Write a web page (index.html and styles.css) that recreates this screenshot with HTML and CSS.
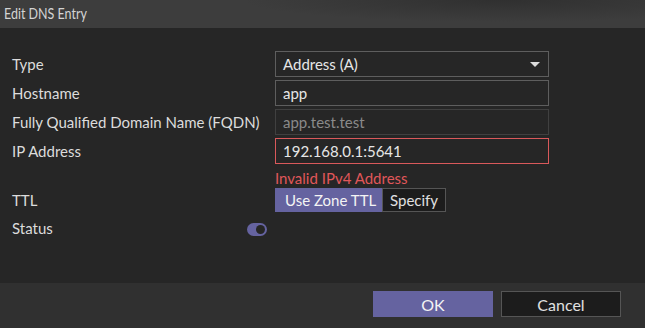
FILE: index.html
```html
<!DOCTYPE html>
<html lang="en">
<head>
    <meta charset="UTF-8">
    <title>Edit DNS Entry</title>
    <link rel="stylesheet" href="styles.css">
</head>
<body>
    <div class="dialog">
        <div class="title"><span class="title-text">Edit DNS Entry</span></div>
        <div class="form">
            <div class="label">Type</div>
            <div class="field select">Address (A)<span class="arrow"></span></div>

            <div class="label">Hostname</div>
            <div class="field">app</div>

            <div class="label">Fully Qualified Domain Name (FQDN)</div>
            <div class="field disabled">app.test.test</div>

            <div class="label">IP Address</div>
            <div class="field invalid">192.168.0.1:5641</div>

            <div></div>
            <div class="error">Invalid IPv4 Address</div>

            <div class="label">TTL</div>
            <div class="segmented">
                <span class="seg active">Use Zone TTL</span>
                <span class="seg">Specify</span>
            </div>

            <div class="label status-label">Status <span class="toggle"><span class="knob"></span></span></div>
            <div></div>
        </div>
        <div class="footer">
            <button class="btn primary">OK</button>
            <button class="btn">Cancel</button>
        </div>
    </div>
</body>
</html>
```
FILE: styles.css
```css
html, body {
    margin: 0;
    height: 100%;
}

body {
    background-color: #262626;
    font-family: Lato, "Open Sans", sans-serif;
    font-size: 15px;
    color: #dcdcdc;
}

.dialog {
    display: flex;
    flex-direction: column;
    height: 100%;
}

.title {
    height: 28px;
    line-height: 26px;
    padding-left: 4px;
    color: #d4d4d4;
    background: radial-gradient(ellipse 260px 22px at 78% 0%, #303030, rgba(60,60,60,0) 100%), #3d3d3d;
}

.title-text {
    display: inline-block;
    font-size: 16px;
    transform: scaleX(0.78);
    transform-origin: left center;
}

.form {
    flex: 1;
    display: grid;
    grid-template-columns: 263px 274px;
    grid-template-rows: 26px 26px 26px 26px 18px 24px 26px;
    row-gap: 3px;
    padding: 23px 0 0 12px;
    align-items: center;
}

.label {
    line-height: 26px;
    white-space: nowrap;
}

.status-label {
    display: flex;
    align-items: center;
    justify-content: space-between;
    padding-right: 8px;
}

.field {
    box-sizing: border-box;
    height: 26px;
    line-height: 24px;
    padding: 0 7px;
    border: 1px solid #5e5e5e;
    color: #e6e6e6;
    position: relative;
}

.field.disabled {
    border-color: #404040;
    color: #8a8a8a;
}

.field.invalid {
    border-color: #d9595b;
}

.arrow {
    position: absolute;
    right: 8px;
    top: 10px;
    width: 0;
    height: 0;
    border-left: 5px solid transparent;
    border-right: 5px solid transparent;
    border-top: 5px solid #dcdcdc;
}

.error {
    color: #e0575a;
    align-self: end;
    line-height: 18px;
    margin-bottom: -2px;
}

.segmented {
    display: flex;
    height: 24px;
}

.seg {
    box-sizing: border-box;
    height: 24px;
    line-height: 22px;
    padding: 0 7px;
    border: 1px solid #555;
    background-color: #1c1c1c;
    color: #e0e0e0;
    white-space: nowrap;
}

.seg.active {
    width: 107px;
    padding: 0 0 0 9px;
    background-color: #6563a0;
    border-color: #6563a0;
    color: #f4f4f4;
}

.toggle {
    box-sizing: border-box;
    width: 20px;
    height: 13px;
    border-radius: 7px;
    background-color: #6563a0;
    display: flex;
    align-items: center;
    justify-content: flex-end;
    padding-right: 2px;
    margin-top: 2px;
}

.knob {
    width: 9px;
    height: 9px;
    border-radius: 50%;
    background-color: #262626;
}

.footer {
    height: 45px;
    background-color: #303030;
    display: flex;
    justify-content: flex-end;
    gap: 8px;
    padding: 8px 24px 0 0;
    box-sizing: border-box;
}

.btn {
    width: 120px;
    height: 26px;
    font-family: Lato, "Open Sans", sans-serif;
    font-size: 16px;
    color: #e0e0e0;
    background-color: #1c1c1c;
    border: 1px solid #555;
    cursor: pointer;
}

.btn.primary {
    background-color: #6563a0;
    border-color: #6563a0;
    color: #f4f4f4;
}
```
